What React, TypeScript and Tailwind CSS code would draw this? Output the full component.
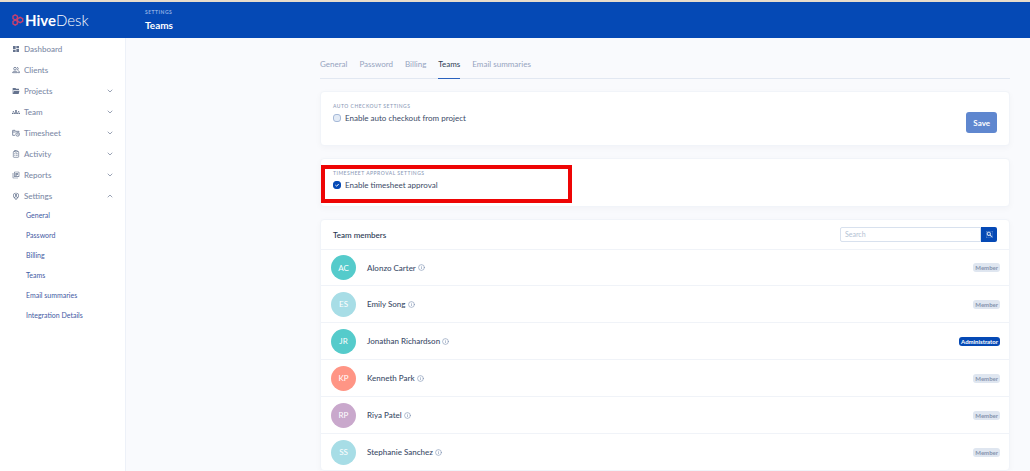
import type { ComponentType, ReactNode } from "react";
import { LuChevronDown, LuChevronUp, LuClipboardList, LuInfo } from "react-icons/lu";
import { MdDashboard, MdOutlineGroups, MdOutlineLibraryBooks, MdSearch } from "react-icons/md";
import { RiFolderOpenFill, RiMapPinUserLine } from "react-icons/ri";

type NavItem = {
  readonly label: string;
  readonly icon: ComponentType<{ className?: string }>;
  readonly toggle?: "open" | "closed";
};

function PeopleIcon({ className }: { readonly className?: string }) {
  return (
    <svg className={className} fill="none" stroke="currentColor" strokeWidth="2.4" viewBox="0 0 24 24">
      <circle cx="9" cy="8" r="4" />
      <path d="M2 20v-2c0-3 14-3 14 0v2Z" />
      <path d="M15 4c5 0 5 8 0 8M18 14.5c3 .6 4.500 2 4.500 3.500v2H18" />
    </svg>
  );
}

function FolderClockIcon({ className }: { readonly className?: string }) {
  return (
    <svg className={className} fill="none" stroke="currentColor" strokeWidth="2.4" viewBox="0 0 24 24">
      <path d="M9 19H2V4h7l2 3h10v3" />
      <path d="M2 9h9" />
      <circle cx="17" cy="16" r="5.5" />
      <path d="M17 13v3h2.5" />
    </svg>
  );
}

const navItems: readonly NavItem[] = [
  { label: "Dashboard", icon: MdDashboard },
  { label: "Clients", icon: PeopleIcon },
  { label: "Projects", icon: RiFolderOpenFill, toggle: "closed" },
  { label: "Team", icon: MdOutlineGroups, toggle: "closed" },
  { label: "Timesheet", icon: FolderClockIcon, toggle: "closed" },
  { label: "Activity", icon: LuClipboardList, toggle: "closed" },
  { label: "Reports", icon: MdOutlineLibraryBooks, toggle: "closed" },
  { label: "Settings", icon: RiMapPinUserLine, toggle: "open" },
];

const settingsLinks = ["General", "Password", "Billing", "Teams", "Email summaries", "Integration Details"];

const tabs = ["General", "Password", "Billing", "Teams", "Email summaries"];

const members = [
  { name: "Alonzo Carter", initials: "AC", color: "bg-[#55cbcb]", role: "Member" },
  { name: "Emily Song", initials: "ES", color: "bg-[#a7dde6]", role: "Member" },
  { name: "Jonathan Richardson", initials: "JR", color: "bg-[#55cbcb]", role: "Administrator" },
  { name: "Kenneth Park", initials: "KP", color: "bg-[#ff9585]", role: "Member" },
  { name: "Riya Patel", initials: "RP", color: "bg-[#c9a8cc]", role: "Member" },
  { name: "Stephanie Sanchez", initials: "SS", color: "bg-[#a7dde6]", role: "Member" },
];

function Logo() {
  return (
    <a aria-label="HiveDesk" className="flex items-center text-[15px] leading-4 text-white" href="#home">
      <svg className="mr-px h-3 w-3" fill="none" stroke="#c8406f" strokeWidth="1.4" viewBox="0 0 12 12">
        <path d="M3.2 .9 5.4 2.1V4.7L3.2 6 1 4.7V2.1Z" />
        <path d="M3.2 6 5.4 7.3V9.9L3.2 11.1 1 9.9V7.3Z" />
        <path d="M8.2 3.3 10.7 4.7V7.3L8.2 8.7 5.6 7.3V4.7Z" />
      </svg>
      <span className="font-bold">Hive</span>
      <span className="font-light">Desk</span>
    </a>
  );
}

function Header() {
  return (
    <header className="flex h-[38px] items-center border-t-2 border-[#e8dccb] bg-[#0549b5]">
      <div className="w-[126px] shrink-0 pl-3">
        <Logo />
      </div>
      <div className="pl-[19px] text-white">
        <p className="text-[5px] leading-[7px] font-bold tracking-widest text-[#8fb0e4]">SETTINGS</p>
        <h1 className="mt-[3px] text-[10px] leading-3 font-bold">Teams</h1>
      </div>
    </header>
  );
}

function Sidebar() {
  return (
    <nav aria-label="Main" className="w-[126px] shrink-0 border-r border-[#edf1f8] bg-white pb-4">
      <ul>
        {navItems.map(({ label, icon: Icon, toggle }) => {
          const Chevron = toggle === "open" ? LuChevronUp : LuChevronDown;

          return (
            <li key={label}>
              <a
                aria-expanded={toggle ? toggle === "open" : undefined}
                className="flex h-[21px] items-center pr-[11px] pl-3 text-[8px] font-medium text-[#7d8aa6]"
                href={`#${label.toLowerCase()}`}
              >
                <Icon className="mr-1 h-2 w-2 text-[#66748f]" />
                <span className="flex-1">{label}</span>
                {toggle && <Chevron className="h-2 w-2 text-[#66748f]" />}
              </a>
            </li>
          );
        })}
      </ul>
      <ul className="-mt-px">
        {settingsLinks.map((label) => (
          <li key={label}>
            <a className="flex h-5 items-center pl-[26px] text-[7px] text-[#3f5aa3]" href={`#settings-${label}`}>
              {label}
            </a>
          </li>
        ))}
      </ul>
    </nav>
  );
}

function Tabs() {
  return (
    <nav aria-label="Settings sections" className="flex gap-3 border-b border-[#e2e8f2] pt-[18px] text-[8px]">
      {tabs.map((label) => (
        <a
          aria-current={label === "Teams" ? "page" : undefined}
          className={[
            "-mb-px border-b pb-1.5 leading-4",
            label === "Teams" ? "border-[#2a62be] text-[#2c3a55]" : "border-transparent text-[#95a3c0]",
          ].join(" ")}
          href={`#tab-${label}`}
          key={label}
        >
          {label}
        </a>
      ))}
    </nav>
  );
}

function Card({ children, className = "" }: { readonly children: ReactNode; readonly className?: string }) {
  return (
    <section
      className={`relative mt-3 rounded-sm border border-[#f1f4f9] bg-white shadow-[0_2px_6px_rgba(18,38,63,0.03)] ${className}`}
    >
      {children}
    </section>
  );
}

function Setting({
  defaultChecked = false,
  label,
  title,
}: {
  readonly defaultChecked?: boolean;
  readonly label: string;
  readonly title: string;
}) {
  return (
    <div>
      <h2 className="text-[5px] leading-[6px] font-medium tracking-widest text-[#8d9bb8] uppercase">{title}</h2>
      <label className="mt-[3px] flex items-center gap-1 text-[8px] leading-3 text-[#3b4a66]">
        <span className="relative flex h-2 w-2">
          <input
            className="peer h-2 w-2 appearance-none rounded-[3px] border border-[#a6b9d8] bg-[#e3ebf6] checked:border-[#0549b5] checked:bg-[#0549b5]"
            defaultChecked={defaultChecked}
            type="checkbox"
          />
          <svg
            className="pointer-events-none absolute inset-0 hidden h-2 w-2 peer-checked:block"
            fill="none"
            stroke="white"
            viewBox="0 0 8 8"
          >
            <path d="M2.4 4.1 3.6 5.2 5.7 3" />
          </svg>
        </span>
        {label}
      </label>
    </div>
  );
}

function MemberList() {
  return (
    <Card>
      <header className="flex h-[30px] items-center justify-between border-b border-[#f0f3f8] px-3">
        <h2 className="text-[8px] font-medium text-[#26344f]">Team members</h2>
        <form className="flex h-[15px]" onSubmit={(event) => event.preventDefault()}>
          <input
            aria-label="Search"
            className="w-[141px] rounded-l-xs border border-[#d8e1ee] px-1 text-[7px] outline-none placeholder:text-[#b3bfd3]"
            placeholder="Search"
            type="text"
          />
          <button
            aria-label="Search members"
            className="flex w-4 items-center justify-center rounded-r-xs bg-[#0549b5] text-white"
            type="submit"
          >
            <MdSearch className="h-[7px] w-[7px] stroke-white stroke-1" />
          </button>
        </form>
      </header>
      <ul className="divide-y divide-[#f0f3f8]">
        {members.map((member) => (
          <li className="flex h-[37px] items-center pr-[9px] pl-[10px] first:h-9 last:h-9" key={member.name}>
            <span
              className={`flex h-[25px] w-[25px] items-center justify-center rounded-full text-[8px] text-white ${member.color}`}
            >
              {member.initials}
            </span>
            <span className="ml-[11px] flex flex-1 items-center gap-0.5 text-[8px] font-medium text-[#3b4c68]">
              {member.name}
              <LuInfo className="h-[7px] w-[7px] text-[#7a8fb0]" />
            </span>
            <span
              className={[
                "rounded-[3px] px-0.5 text-[6px] leading-[9px] font-bold",
                member.role === "Administrator" ? "bg-[#0549b5] text-white" : "bg-[#dfe6f0] text-[#8593ae]",
              ].join(" ")}
            >
              {member.role}
            </span>
          </li>
        ))}
      </ul>
    </Card>
  );
}

export default function App() {
  return (
    <div className="flex min-h-screen flex-col bg-[#f9fafd] font-['Lato',sans-serif]">
      <Header />
      <div className="flex flex-1">
        <Sidebar />
        <main className="min-w-0 flex-1 pr-5 pl-[194px]">
          <Tabs />
          <Card className="flex h-[55px] justify-between px-3 pt-[11px]">
            <Setting label="Enable auto checkout from project" title="Auto checkout settings" />
            <button
              className="mt-[9px] h-[21px] rounded-[3px] bg-[#5f87cf] px-[7px] text-[8px] font-bold text-white"
              type="button"
            >
              Save
            </button>
          </Card>
          <Card className="h-[49px] px-3 pt-[11px]">
            <Setting defaultChecked label="Enable timesheet approval" title="Timesheet approval settings" />
            <div className="pointer-events-none absolute top-[6px] left-0 h-[38px] w-[251px] border-4 border-[#ee0505]" />
          </Card>
          <MemberList />
        </main>
      </div>
    </div>
  );
}
